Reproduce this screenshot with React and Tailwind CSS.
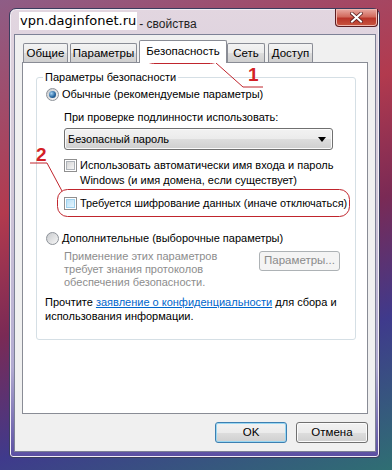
import React from "react";

const ui = { fontFamily: '"Liberation Sans", Arial, sans-serif' };

const Tab = ({ label, width, active, className = "" }) =>
  active ? (
    <div
      className={`relative z-10 -mb-[1px] flex h-[23px] items-start justify-center rounded-t-[2px] border border-b-0 border-[#898c95] bg-white pt-[3px] text-[11.5px] leading-[15px] text-black ${className}`}
      style={{ width }}
    >
      {label}
    </div>
  ) : (
    <div
      className={`flex h-[19px] items-start justify-center rounded-t-[2px] border border-b-0 border-[#898c95] bg-[linear-gradient(#f3f3f3,#ebebeb_50%,#dddddd_51%,#cfcfcf)] pt-[2px] text-[11.5px] leading-[15px] text-black ${className}`}
      style={{ width }}
    >
      {label}
    </div>
  );

const Checkbox = ({ hover }) => (
  <span className="flex h-[13px] w-[13px] shrink-0 items-center justify-center border border-[#8f8f8f] bg-white">
    <span
      className={`h-[9px] w-[9px] border ${
        hover
          ? "border-[#9fd2ef] bg-[linear-gradient(135deg,#b9e0f6,#e6f5fd)]"
          : "border-[#aeb3b9] bg-[linear-gradient(135deg,#d5d5d5,#f6f6f6)]"
      }`}
    />
  </span>
);

const Radio = ({ checked }) => (
  <span className="flex h-[13px] w-[13px] shrink-0 items-center justify-center rounded-full border border-[#8d9299] bg-[linear-gradient(135deg,#c9cbce,#f7f7f7)]">
    {checked && (
      <span className="h-[7px] w-[7px] rounded-full bg-[radial-gradient(circle_at_35%_35%,#a6d2f2,#2a6aa3_55%,#10365f)]" />
    )}
  </span>
);

const WinButton = ({ children, isDefault, disabled, className = "" }) => (
  <div
    className={`flex items-center justify-center rounded-[3px] border text-[11.5px] ${
      disabled
        ? "border-[#adb2b5] bg-[#f4f4f4] text-[#8a8a8a]"
        : isDefault
        ? "border-[#3c7fb1] bg-[linear-gradient(#f2f2f2,#ebebeb_50%,#dddddd_51%,#cfcfcf)] text-black shadow-[inset_0_0_0_1px_#9ad7f2]"
        : "border-[#707070] bg-[linear-gradient(#f2f2f2,#ebebeb_50%,#dddddd_51%,#cfcfcf)] text-black shadow-[inset_0_0_0_1px_#fbfbfb]"
    } ${className}`}
  >
    {children}
  </div>
);

const Annotations = () => (
  <svg
    className="pointer-events-none absolute left-0 top-0"
    width="392"
    height="470"
    viewBox="0 0 392 470"
  >
    <rect x="143.5" y="42.5" width="77" height="21" rx="10" fill="none" stroke="#c0252d" strokeWidth="1" />
    <polyline points="216,63 243,87 263,87" fill="none" stroke="#c0252d" strokeWidth="1" />
    <text x="248" y="81" fill="#d41f26" fontSize="19" fontWeight="bold" fontFamily="Liberation Sans, Arial, sans-serif">
      1
    </text>
    <rect x="57.5" y="189.5" width="292" height="27" rx="10" fill="none" stroke="#c0252d" strokeWidth="1" />
    <polyline points="30,163 47,163 62,191" fill="none" stroke="#c0252d" strokeWidth="1" />
    <text x="36" y="161" fill="#d41f26" fontSize="19" fontWeight="bold" fontFamily="Liberation Sans, Arial, sans-serif">
      2
    </text>
  </svg>
);

export default function App() {
  return (
    <div
      className="relative h-[470px] w-[392px] overflow-hidden bg-[linear-gradient(160deg,#8e5d86_0%,#b23a4e_35%,#7a2a55_55%,#3f3a8c_75%,#2f6f73_100%)] pl-[9px] pt-[8px]"
      style={ui}
    >
      <div className="flex h-[450px] w-[371px] flex-col rounded-t-[7px] rounded-b-[4px] border border-[#3a3d5e] bg-[linear-gradient(#e2d6e0,#d3c9d9_40%,#b3acd2_80%,#5a4ea2)] shadow-[inset_0_0_0_1px_#f2eef5]">
        <div className="flex h-[25px] items-start">
          <div className="ml-[9px] mt-[3px] flex h-[18px] items-center whitespace-nowrap bg-white px-[1px] text-[13px] text-black" style={{ fontFamily: '"DejaVu Sans", Verdana, sans-serif' }}>
            vpn.daginfonet.ru
          </div>
          <div className="ml-[2px] mt-[6px] text-[12px] text-[#1e1e1e]">- свойства</div>
          <div className="ml-auto mr-[1px] flex h-[18px] w-[43px] items-center justify-center rounded-b-[4px] border border-t-0 border-[#5b1d22] bg-[linear-gradient(#e9aaa3,#d26b5e_45%,#b9352a_55%,#c8553f)] shadow-[inset_0_0_0_1px_#f0b8b0]">
            <svg width="13" height="11" viewBox="0 0 13 11">
              <path d="M2 1.5 L11 9.5 M11 1.5 L2 9.5" stroke="#5a1e1e" strokeWidth="3.6" strokeLinecap="square" />
              <path d="M2 1.5 L11 9.5 M11 1.5 L2 9.5" stroke="#ffffff" strokeWidth="2" strokeLinecap="square" />
            </svg>
          </div>
        </div>

        <div className="ml-[4px] mr-[3px] h-[418px] border border-[#7d8196] bg-[#f0f0f0]">
          <div className="pl-[7px] pr-[7px] pt-[6px]">
            <div className="flex h-[21px] items-end pl-[1px]">
              <Tab label="Общие" width={45} />
              <Tab label="Параметры" width={67} className="ml-[2px]" />
              <Tab label="Безопасность" width={88} active className="ml-[2px]" />
              <Tab label="Сеть" width={38} />
              <Tab label="Доступ" width={45} className="ml-[3px]" />
            </div>

            <div className="h-[352px] w-[346px] border border-[#898c95] bg-white pl-[13px] pr-[11px] pt-[7px]">
              <fieldset className="rounded-[3px] border border-[#d5dfe5] pb-[16px]">
                <legend className="ml-[6px] px-[2px] text-[11px] leading-[15px] text-black">
                  Параметры безопасности
                </legend>
                <div className="whitespace-nowrap pl-[8px] text-[11px] text-black">
                  <div className="ml-[1px] mt-[2px] flex h-[15px] items-center gap-[3px]">
                    <Radio checked />
                    <span className="leading-[15px]">Обычные (рекомендуемые параметры)</span>
                  </div>

                  <div className="ml-[19px] mt-[8px] leading-[15px]">
                    При проверке подлинности использовать:
                  </div>

                  <div className="ml-[19px] mt-[3px] flex h-[22px] w-[269px] items-center justify-between rounded-[3px] border border-[#707070] bg-[linear-gradient(#f2f2f2,#ebebeb_50%,#dddddd_51%,#cfcfcf)] pl-[3px] pr-[6px] shadow-[inset_0_0_0_1px_#fbfbfb]">
                    <span>Безопасный пароль</span>
                    <svg width="8" height="5" viewBox="0 0 8 5">
                      <path d="M0 0 H8 L4 5 Z" fill="#000" />
                    </svg>
                  </div>

                  <div className="ml-[19px] mt-[8px] flex items-start gap-[3px]">
                    <span className="mt-[1px]">
                      <Checkbox />
                    </span>
                    <span className="leading-[15px]">
                      Использовать автоматически имя входа и пароль
                      <br />
                      Windows (и имя домена, если существует)
                    </span>
                  </div>

                  <div className="ml-[19px] mt-[8px] flex h-[15px] items-center gap-[3px]">
                    <Checkbox hover />
                    <span className="text-[10.9px] leading-[15px]">Требуется шифрование данных (иначе отключаться)</span>
                  </div>

                  <div className="ml-[1px] mt-[20px] flex h-[15px] items-center gap-[3px]">
                    <Radio />
                    <span className="leading-[15px]">Дополнительные (выборочные параметры)</span>
                  </div>

                  <div className="ml-[19px] mt-[4px] flex items-start">
                    <div className="w-[195px] leading-[13px] text-[#8d8d8d]">
                      Применение этих параметров
                      <br />
                      требует знания протоколов
                      <br />
                      обеспечения безопасности.
                    </div>
                    <WinButton disabled className="mt-[1px] h-[20px] w-[81px]">
                      Параметры...
                    </WinButton>
                  </div>

                  <div className="mt-[6px] leading-[14px]">
                    Прочтите{" "}
                    <span className="text-[#0066cc] underline">заявление о конфиденциальности</span>{" "}
                    для сбора и
                    <br />
                    использования информации.
                  </div>
                </div>
              </fieldset>
            </div>

            <div className="mt-[8px] flex justify-end gap-[9px] pr-[0px]">
              <WinButton isDefault className="h-[21px] w-[72px]">
                OK
              </WinButton>
              <WinButton className="h-[21px] w-[72px]">Отмена</WinButton>
            </div>
          </div>
        </div>
      </div>
      <Annotations />
    </div>
  );
}
